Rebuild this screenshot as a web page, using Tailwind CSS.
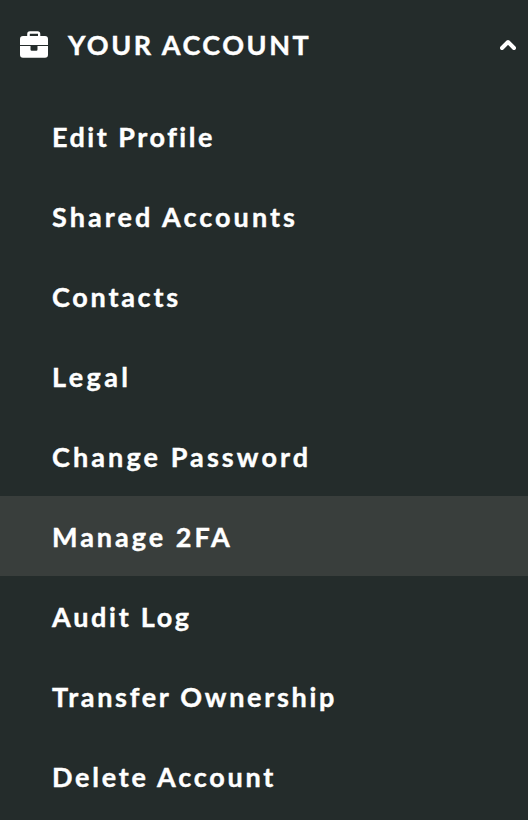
<!DOCTYPE html>
<html lang="en">
<head>
  <meta charset="UTF-8">
  <meta name="viewport" content="width=device-width, initial-scale=1.0">
  <title>Your Account</title>
  <script src="https://cdn.jsdelivr.net/npm/@tailwindcss/browser@4"></script>
</head>
<body class="bg-[#242c2b] h-screen overflow-hidden text-white font-bold text-[27px] font-['Lato',sans-serif] [-webkit-text-stroke:0.4px_white]">
  <nav>
    <button class="flex items-center w-full h-24 pl-5 pr-3 pb-1">
      <svg class="w-7 h-7 mb-1 shrink-0" viewBox="0 0 28 28" fill="currentColor" stroke="none">
        <path fill-rule="evenodd" d="M7.200 6V4a2.700 2.700 0 0 1 2.700-2.700h7.700a2.700 2.700 0 0 1 2.700 2.700v2H25a3 3 0 0 1 3 3v6H0V9a3 3 0 0 1 3-3zM9.800 6h8.200V3.700H9.800z"/>
        <path d="M0 16h10.500v3.500a1.200 1.200 0 0 0 1.200 1.200h4.600a1.200 1.200 0 0 0 1.200-1.200V16H28v8.700a3 3 0 0 1-3 3H3a3 3 0 0 1-3-3z"/>
      </svg>
      <span class="ml-5 mb-0.5 tracking-[2.5px]">YOUR ACCOUNT</span>
      <svg class="ml-auto mb-0.5 w-4 h-3 shrink-0" viewBox="0 0 16 12" fill="none" stroke="currentColor" stroke-width="4" stroke-linecap="round" stroke-linejoin="round">
        <path d="M2 9l6-6 6 6"/>
      </svg>
    </button>
    <ul>
      <li><a href="#" class="flex items-center h-20 pl-13 pt-0.5 tracking-[2.5px]">Edit Profile</a></li>
      <li><a href="#" class="flex items-center h-20 pl-13 pt-0.5 tracking-[3.05px]">Shared Accounts</a></li>
      <li><a href="#" class="flex items-center h-20 pl-13 pt-0.5 tracking-[2.75px]">Contacts</a></li>
      <li><a href="#" class="flex items-center h-20 pl-13 pt-0.5 tracking-[3.4px]">Legal</a></li>
      <li><a href="#" class="flex items-center h-20 pl-13 pt-0.5 tracking-[3.1px]">Change Password</a></li>
      <li><a href="#" class="flex items-center h-20 pl-13 pt-0.5 tracking-[3px] bg-[#393e3c]">Manage 2FA</a></li>
      <li><a href="#" class="flex items-center h-20 pl-13 pt-0.5 tracking-[2.7px]">Audit Log</a></li>
      <li><a href="#" class="flex items-center h-20 pl-13 pt-0.5 tracking-[2.7px]">Transfer Ownership</a></li>
      <li><a href="#" class="flex items-center h-20 pl-13 pt-0.5 tracking-[2.75px]">Delete Account</a></li>
    </ul>
  </nav>
</body>
</html>
